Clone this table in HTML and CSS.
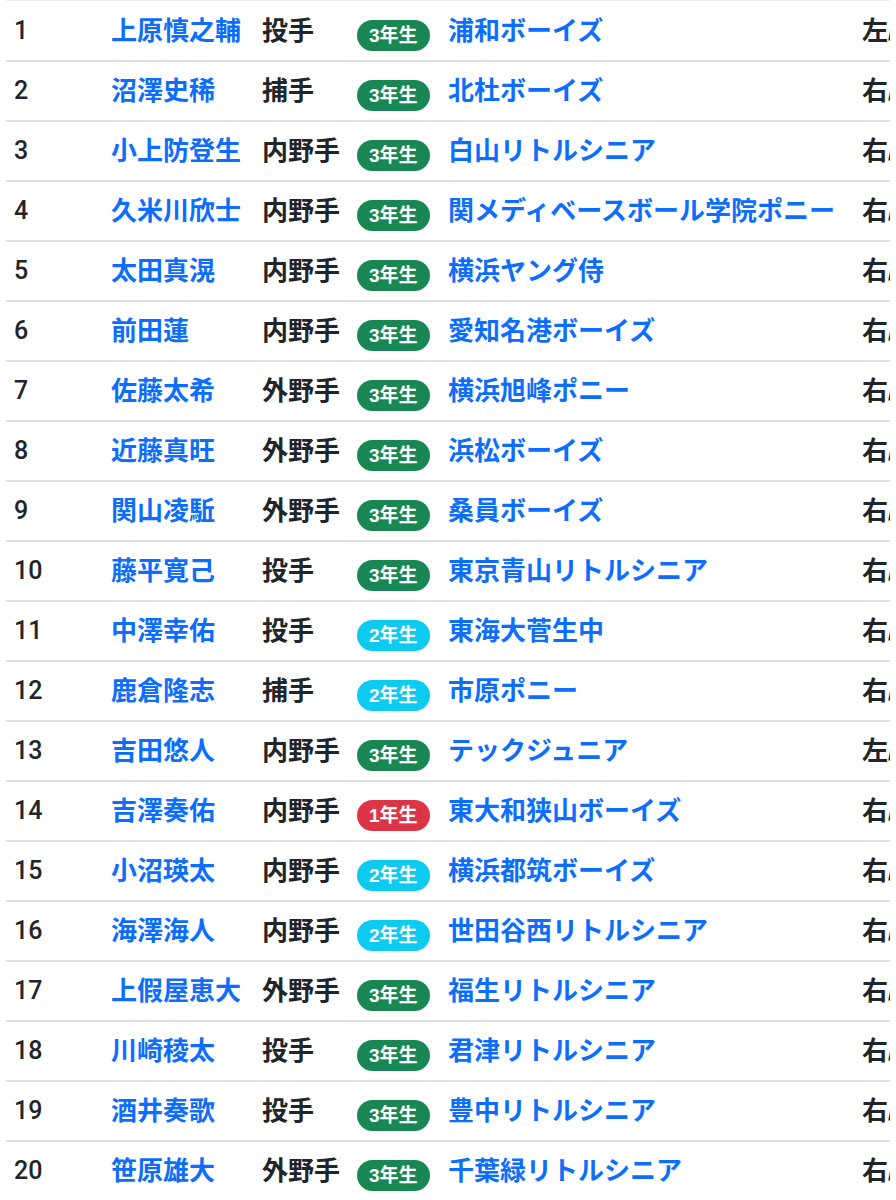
FILE: index.html
```html
<!DOCTYPE html>
<html lang="ja">

<head>
    <meta charset="UTF-8">
    <meta name="viewport" content="width=device-width, initial-scale=1.0">
    <title>選手一覧</title>
    <link rel="stylesheet" href="styles.css">
</head>

<body>
    <div class="table-wrap">
        <table class="player-table">
            <colgroup>
                <col class="col-no">
                <col class="col-name">
                <col class="col-pos">
                <col class="col-grade">
                <col class="col-team">
                <col class="col-hand">
            </colgroup>
            <tbody>
                <tr><td class="no">1</td><td><a href="#">上原慎之輔</a></td><td>投手</td><td><span class="badge grade-3">3年生</span></td><td><a href="#">浦和ボーイズ</a></td><td>左/左</td></tr>
                <tr><td class="no">2</td><td><a href="#">沼澤史稀</a></td><td>捕手</td><td><span class="badge grade-3">3年生</span></td><td><a href="#">北杜ボーイズ</a></td><td>右/右</td></tr>
                <tr><td class="no">3</td><td><a href="#">小上防登生</a></td><td>内野手</td><td><span class="badge grade-3">3年生</span></td><td><a href="#">白山リトルシニア</a></td><td>右/右</td></tr>
                <tr><td class="no">4</td><td><a href="#">久米川欣士</a></td><td>内野手</td><td><span class="badge grade-3">3年生</span></td><td><a href="#">関メディベースボール学院ポニー</a></td><td>右/右</td></tr>
                <tr><td class="no">5</td><td><a href="#">太田真滉</a></td><td>内野手</td><td><span class="badge grade-3">3年生</span></td><td><a href="#">横浜ヤング侍</a></td><td>右/右</td></tr>
                <tr><td class="no">6</td><td><a href="#">前田蓮</a></td><td>内野手</td><td><span class="badge grade-3">3年生</span></td><td><a href="#">愛知名港ボーイズ</a></td><td>右/右</td></tr>
                <tr><td class="no">7</td><td><a href="#">佐藤太希</a></td><td>外野手</td><td><span class="badge grade-3">3年生</span></td><td><a href="#">横浜旭峰ポニー</a></td><td>右/右</td></tr>
                <tr><td class="no">8</td><td><a href="#">近藤真旺</a></td><td>外野手</td><td><span class="badge grade-3">3年生</span></td><td><a href="#">浜松ボーイズ</a></td><td>右/右</td></tr>
                <tr><td class="no">9</td><td><a href="#">関山凌駈</a></td><td>外野手</td><td><span class="badge grade-3">3年生</span></td><td><a href="#">桑員ボーイズ</a></td><td>右/右</td></tr>
                <tr><td class="no">10</td><td><a href="#">藤平寛己</a></td><td>投手</td><td><span class="badge grade-3">3年生</span></td><td><a href="#">東京青山リトルシニア</a></td><td>右/右</td></tr>
                <tr><td class="no">11</td><td><a href="#">中澤幸佑</a></td><td>投手</td><td><span class="badge grade-2">2年生</span></td><td><a href="#">東海大菅生中</a></td><td>右/右</td></tr>
                <tr><td class="no">12</td><td><a href="#">鹿倉隆志</a></td><td>捕手</td><td><span class="badge grade-2">2年生</span></td><td><a href="#">市原ポニー</a></td><td>右/右</td></tr>
                <tr><td class="no">13</td><td><a href="#">吉田悠人</a></td><td>内野手</td><td><span class="badge grade-3">3年生</span></td><td><a href="#">テックジュニア</a></td><td>左/左</td></tr>
                <tr><td class="no">14</td><td><a href="#">吉澤奏佑</a></td><td>内野手</td><td><span class="badge grade-1">1年生</span></td><td><a href="#">東大和狭山ボーイズ</a></td><td>右/右</td></tr>
                <tr><td class="no">15</td><td><a href="#">小沼瑛太</a></td><td>内野手</td><td><span class="badge grade-2">2年生</span></td><td><a href="#">横浜都筑ボーイズ</a></td><td>右/右</td></tr>
                <tr><td class="no">16</td><td><a href="#">海澤海人</a></td><td>内野手</td><td><span class="badge grade-2">2年生</span></td><td><a href="#">世田谷西リトルシニア</a></td><td>右/右</td></tr>
                <tr><td class="no">17</td><td><a href="#">上假屋恵大</a></td><td>外野手</td><td><span class="badge grade-3">3年生</span></td><td><a href="#">福生リトルシニア</a></td><td>右/右</td></tr>
                <tr><td class="no">18</td><td><a href="#">川崎稜太</a></td><td>投手</td><td><span class="badge grade-3">3年生</span></td><td><a href="#">君津リトルシニア</a></td><td>右/右</td></tr>
                <tr><td class="no">19</td><td><a href="#">酒井奏歌</a></td><td>投手</td><td><span class="badge grade-3">3年生</span></td><td><a href="#">豊中リトルシニア</a></td><td>右/右</td></tr>
                <tr><td class="no">20</td><td><a href="#">笹原雄大</a></td><td>外野手</td><td><span class="badge grade-3">3年生</span></td><td><a href="#">千葉緑リトルシニア</a></td><td>右/右</td></tr>
            </tbody>
        </table>
    </div>
</body>

</html>
```

FILE: styles.css
```css
body {
    margin: 0;
    padding: 0;
    background-color: #ffffff;
    font-family: "Liberation Sans", "Noto Sans CJK JP", sans-serif;
    color: #212529;
}

.table-wrap {
    margin-left: 6px;
    width: 884px;
    overflow: hidden;
    border-top: 1px solid #eeeeee;
}

.player-table {
    width: 960px;
    table-layout: fixed;
    border-collapse: collapse;
    font-size: 26px;
    font-weight: 700;
    line-height: 36px;
}

.col-no {
    width: 97px;
}

.col-name {
    width: 151px;
}

.col-pos {
    width: 95px;
}

.col-grade {
    width: 91px;
}

.col-team {
    width: 414px;
}

.player-table tr {
    height: 60px;
}

.player-table td {
    padding: 0 8px;
    border-bottom: 2px solid #dee2e6;
    white-space: nowrap;
    overflow: hidden;
    vertical-align: middle;
}

.player-table td.no {
    font-family: Roboto, "Liberation Sans", sans-serif;
    font-weight: 500;
    font-size: 25px;
}

.player-table a {
    color: #0d6efd;
    text-decoration: none;
}

.badge {
    display: inline-block;
    padding: 6px 12px;
    font-size: 19px;
    font-weight: 700;
    line-height: 19px;
    color: #ffffff;
    border-radius: 50rem;
    vertical-align: -4px;
}

.grade-3 {
    background-color: #198754;
}

.grade-2 {
    background-color: #0dcaf0;
}

.grade-1 {
    background-color: #dc3545;
}
```
